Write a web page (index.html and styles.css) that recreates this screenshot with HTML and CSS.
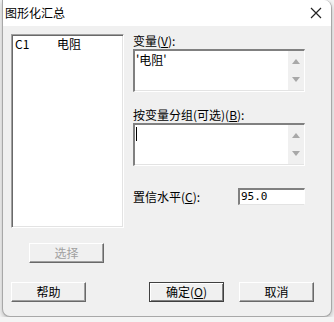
FILE: index.html
```html
<!DOCTYPE html>
<html lang="zh-CN">
<head>
    <meta charset="UTF-8">
    <title>图形化汇总</title>
    <link rel="stylesheet" href="styles.css">
</head>
<body>
    <div class="window">
        <div class="titlebar">
            <span class="title">图形化汇总</span>
            <svg class="close" width="12" height="12" viewBox="0 0 12 12">
                <path d="M1 1 L11 11 M11 1 L1 11" stroke="#222" stroke-width="1.2" fill="none"/>
            </svg>
        </div>
        <div class="content">
            <div class="top">
                <div class="left-col">
                    <div class="listbox">
                        <div class="list-row"><span class="col-id">C1</span><span>电阻</span></div>
                    </div>
                    <button class="btn btn-select" disabled>选择</button>
                </div>
                <div class="right-col">
                    <label class="field-label">变量(<u>V</u>):</label>
                    <div class="textbox">
                        <div class="textbox-text">'电阻'</div>
                        <div class="scroll">
                            <svg width="8" height="5" viewBox="0 0 8 5"><path d="M0 5 L4 0 L8 5 Z" fill="#a8a8a8"/></svg>
                            <svg width="8" height="5" viewBox="0 0 8 5"><path d="M0 0 L4 5 L8 0 Z" fill="#a8a8a8"/></svg>
                        </div>
                    </div>
                    <label class="field-label label-gap">按变量分组(可选)(<u>B</u>):</label>
                    <div class="textbox">
                        <div class="textbox-text"><span class="caret"></span></div>
                        <div class="scroll">
                            <svg width="8" height="5" viewBox="0 0 8 5"><path d="M0 5 L4 0 L8 5 Z" fill="#a8a8a8"/></svg>
                            <svg width="8" height="5" viewBox="0 0 8 5"><path d="M0 0 L4 5 L8 0 Z" fill="#a8a8a8"/></svg>
                        </div>
                    </div>
                    <div class="conf-row">
                        <label class="field-label">置信水平(<u>C</u>):</label>
                        <div class="input">95.0</div>
                    </div>
                </div>
            </div>
            <div class="bottom">
                <button class="btn">帮助</button>
                <button class="btn btn-default">确定(<u>O</u>)</button>
                <button class="btn btn-cancel">取消</button>
            </div>
        </div>
    </div>
</body>
</html>
```
FILE: styles.css
```css
body {
    margin: 0;
    background-color: #f4f4f4;
    font-family: "Noto Sans CJK SC", sans-serif;
    font-size: 12px;
    color: #000;
}
.window {
    margin-left: 2px;
    width: 328px;
    height: 316px;
    background-color: #f0f0f0;
    border: 1px solid #a8a8a8;
    border-top: none;
    border-radius: 0 8px 8px 8px;
    box-shadow: 0 2px 5px rgba(0, 0, 0, 0.25);
    overflow: hidden;
}
.titlebar {
    height: 26px;
    background-color: #fff;
    display: flex;
    align-items: center;
    justify-content: space-between;
    padding: 0 8px 0 2px;
}
.title {
    font-size: 12px;
    line-height: 14px;
}
.close {
    margin-right: 1px;
}
.content {
    padding: 8px 0 0 8px;
}
.top {
    display: flex;
    gap: 9px;
}
.left-col {
    display: flex;
    flex-direction: column;
}
.listbox {
    width: 108px;
    height: 191px;
    background-color: #fff;
    border-top: 1px solid #a0a0a0;
    border-left: 1px solid #a0a0a0;
    border-right: 1px solid #fff;
    border-bottom: 1px solid #fff;
    box-shadow: inset 1px 1px 0 #696969, inset -1px -1px 0 #e3e3e3;
    padding: 1px 0 0 3px;
}
.list-row {
    display: flex;
    line-height: 16px;
}
.col-id {
    width: 42px;
}
.btn {
    width: 75px;
    height: 20px;
    padding: 0;
    font-family: "Noto Sans CJK SC", sans-serif;
    font-size: 12px;
    background-color: #f0f0f0;
    border-top: 1px solid #fff;
    border-left: 1px solid #fff;
    border-right: 1px solid #696969;
    border-bottom: 1px solid #696969;
    box-shadow: inset -1px -1px 0 #a0a0a0;
    color: #000;
    line-height: 16px;
}
.btn-select {
    margin: 15px 0 0 18px;
    color: #a0a0a0;
}
.btn-default {
    margin-left: 63px;
    border: 1px solid #404040;
    box-shadow: inset 1px 1px 0 #fff, inset -1px -1px 0 #808080;
}
.btn-cancel {
    margin-left: 15px;
}
.right-col {
    width: 172px;
    margin-top: -1px;
    display: flex;
    flex-direction: column;
}
.field-label {
    line-height: 16px;
}
.label-gap {
    margin-top: 15px;
}
.textbox {
    height: 40px;
    display: flex;
    background-color: #fff;
    border-top: 2px solid #808080;
    border-left: 2px solid #808080;
    border-right: 1px solid #fff;
    border-bottom: 1px solid #fff;
    box-shadow: inset -1px -1px 0 #e3e3e3;
}
.textbox-text {
    flex: 1;
    padding: 1px 0 0 1px;
    line-height: 16px;
}
.caret {
    display: inline-block;
    width: 1px;
    height: 14px;
    margin-top: 1px;
    background-color: #000;
}
.scroll {
    width: 16px;
    margin-bottom: 1px;
    background-color: #f0f0f0;
    display: flex;
    flex-direction: column;
    justify-content: space-between;
    align-items: center;
    padding: 8px 0 8px;
}
.conf-row {
    margin-top: 22px;
    display: flex;
    justify-content: space-between;
    align-items: center;
}
.input {
    width: 63px;
    height: 14px;
    background-color: #fff;
    border-top: 2px solid #808080;
    border-left: 2px solid #808080;
    border-right: 1px solid #fff;
    border-bottom: 1px solid #e3e3e3;
    padding-left: 1px;
    line-height: 14px;
    font-family: "DejaVu Sans Mono", monospace;
    font-size: 11px;
}
.bottom {
    margin-top: 19px;
    display: flex;
}
```
